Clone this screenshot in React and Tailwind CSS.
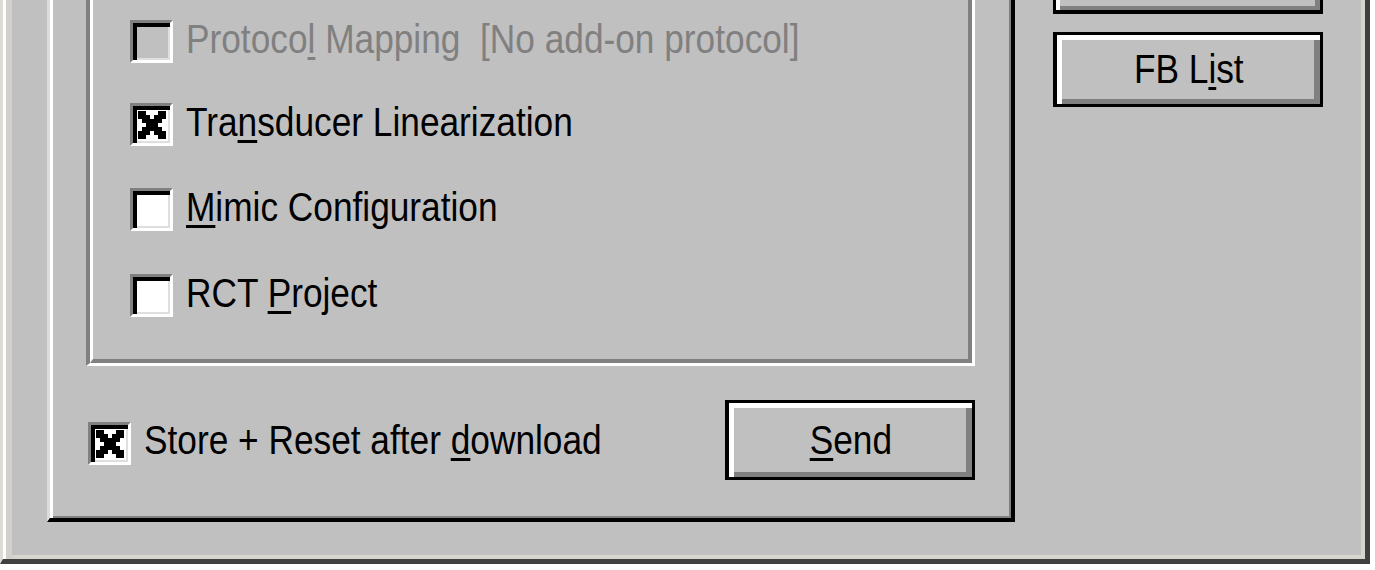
import React from "react";

const X_PATH =
  "M0 0h2v1h-2z M5 0h2v1h-2z M0 1h3v1h-3z M4 1h3v1h-3z M1 2h5v1h-5z M2 3h3v1h-3z M1 4h5v1h-5z M0 5h3v1h-3z M4 5h3v1h-3z M0 6h2v1h-2z M5 6h2v1h-2z";

function XMark() {
  return (
    <svg width="28" height="28" viewBox="0 0 7 7" shapeRendering="crispEdges" className="block">
      <path d={X_PATH} fill="#000" />
    </svg>
  );
}

function CheckBox({ checked, disabled }) {
  return (
    <div
      className={`h-[43px] w-[43px] shrink-0 border-[3px] border-t-[#808080] border-l-[#808080] border-r-white border-b-white pt-[5px] pl-[5px] shadow-[inset_4px_4px_0_#000,inset_-2px_-2px_0_#dfdfdf] ${
        disabled ? "bg-[#c0c0c0]" : "bg-white"
      }`}
    >
      {checked && <XMark />}
    </div>
  );
}

function Key({ children }) {
  return <u className="decoration-[3px] underline-offset-[4px]">{children}</u>;
}

function Label({ children, disabled }) {
  return (
    <span
      className={`mb-[5px] ml-[13px] inline-block origin-left scale-x-[0.86] whitespace-pre text-[41px] leading-none ${
        disabled ? "text-[#808080]" : "text-black"
      }`}
    >
      {children}
    </span>
  );
}

function Option({ checked, disabled, children, className = "" }) {
  return (
    <div className={`flex h-[43px] items-center ${className}`}>
      <CheckBox checked={checked} disabled={disabled} />
      <Label disabled={disabled}>{children}</Label>
    </div>
  );
}

function Button({ children, className = "" }) {
  return (
    <div
      className={`flex items-center justify-center border-[3px] border-l-[4px] border-black bg-[#c0c0c0] shadow-[inset_5px_5px_0_#ffffff,inset_-6px_-5px_0_#808080] ${className}`}
    >
      <span className="inline-block scale-x-[0.86] text-[41px] leading-none text-black">{children}</span>
    </div>
  );
}

export default function App() {
  return (
    <div className="h-[570px] w-[1375px] overflow-hidden bg-white font-['Liberation_Sans',Arial,sans-serif]">
      <div className="flex h-[564px] w-[1370px] items-start border-l-[3px] border-r-[5px] border-b-[5px] border-l-[#dedad6] border-r-[#404040] border-b-[#404040] bg-[#c0c0c0] shadow-[inset_3px_0_0_#ffffff,inset_9px_0_0_#d2d0cc,inset_-4px_-4px_0_#d6d6ce]">
        {/* main frame */}
        <div className="ml-[44px] flex h-[522px] w-[968px] flex-col border-l-[3px] border-r-[4px] border-b-[4px] border-l-[#dcdcdc] border-r-black border-b-black shadow-[inset_3px_0_0_#ffffff,inset_-2px_-2px_0_#808080]">
          {/* etched group */}
          <div className="mx-[36px] border-l-[4px] border-r-[3px] border-b-[3px] border-l-[#808080] border-r-white border-b-white">
            <div className="flex flex-col gap-[42px] border-l-[3px] border-r-[4px] border-b-[4px] border-l-white border-r-[#808080] border-b-[#808080] pt-[18px] pb-[43px] pl-[37px]">
              <Option disabled className="relative top-[2px]">
                Protoco<Key>l</Key> Mapping  [No add-on protocol]
              </Option>
              <Option checked>
                Tra<Key>n</Key>sducer Linearization
              </Option>
              <Option>
                <Key>M</Key>imic Configuration
              </Option>
              <Option className="relative top-[1px]">
                RCT <Key>P</Key>roject
              </Option>
            </div>
          </div>

          <div className="mx-[36px] mt-[34px] flex items-center justify-between">
            <div className="ml-[2px] mt-[6px] flex items-center">
              <CheckBox checked />
              <Label>
                Store + Reset after <Key>d</Key>ownload
              </Label>
            </div>
            <Button className="h-[80px] w-[250px]">
              <Key>S</Key>end
            </Button>
          </div>
        </div>

        {/* right column */}
        <div className="ml-[38px] flex w-[270px] flex-col">
          <div className="h-[14px] border-x-[3px] border-b-[4px] border-black bg-[#c0c0c0] shadow-[inset_4px_0_0_#ffffff,inset_-5px_-4px_0_#808080]" />
          <Button className="mt-[18px] h-[75px]">
            FB L<Key>i</Key>st
          </Button>
        </div>
      </div>
    </div>
  );
}
